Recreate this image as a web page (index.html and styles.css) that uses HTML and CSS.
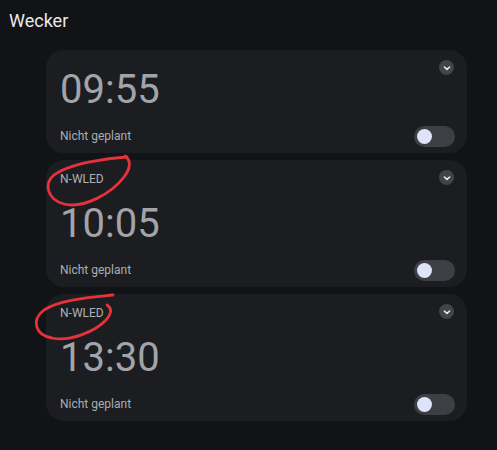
FILE: index.html
```html
<!DOCTYPE html>
<html lang="de">
<head>
<meta charset="utf-8">
<title>Wecker</title>
<link rel="stylesheet" href="styles.css">
</head>
<body>
<div class="page">
  <h1 class="title">Wecker</h1>
  <div class="list">
    <div class="card">
      <div class="main first">
        <div class="time">09:55</div>
        <div class="sched">Nicht geplant</div>
      </div>
      <div class="side">
        <span class="chev"><svg viewBox="0 0 16 16" width="16" height="16"><path d="M5 6.8 L8 9.6 L11 6.8" fill="none" stroke="#eceef2" stroke-width="1.7" stroke-linecap="round" stroke-linejoin="round"/></svg></span>
        <span class="toggle"><span class="knob"></span></span>
      </div>
    </div>
    <div class="card">
      <div class="main">
        <div class="label">N-WLED</div>
        <div class="time">10:05</div>
        <div class="sched">Nicht geplant</div>
      </div>
      <div class="side">
        <span class="chev"><svg viewBox="0 0 16 16" width="16" height="16"><path d="M5 6.8 L8 9.6 L11 6.8" fill="none" stroke="#eceef2" stroke-width="1.7" stroke-linecap="round" stroke-linejoin="round"/></svg></span>
        <span class="toggle"><span class="knob"></span></span>
      </div>
    </div>
    <div class="card">
      <div class="main">
        <div class="label">N-WLED</div>
        <div class="time">13:30</div>
        <div class="sched">Nicht geplant</div>
      </div>
      <div class="side">
        <span class="chev"><svg viewBox="0 0 16 16" width="16" height="16"><path d="M5 6.8 L8 9.6 L11 6.8" fill="none" stroke="#eceef2" stroke-width="1.7" stroke-linecap="round" stroke-linejoin="round"/></svg></span>
        <span class="toggle"><span class="knob"></span></span>
      </div>
    </div>
  </div>
  <svg class="marks" viewBox="0 0 497 450" width="497" height="450">
    <path d="M127 157 C110 158 70 163 54 175 C43 184 48 200 64 204 C84 209 112 193 124 177 C131 168 131 160 125 156" fill="none" stroke="#e8323b" stroke-width="2.8" stroke-linecap="round"/>
    <path d="M113 295 C95 297 60 299 44 310 C31 320 35 335 52 338 C70 342 96 331 106 320 C112 313 112 308 107 305" fill="none" stroke="#e8323b" stroke-width="2.8" stroke-linecap="round"/>
  </svg>
</div>
</body>
</html>
```

FILE: styles.css
```css
html, body {
  margin: 0;
  padding: 0;
  background: #121317;
}
body {
  font-family: Roboto, "Noto Sans", sans-serif;
  width: 497px;
  height: 450px;
  overflow: hidden;
}
.page {
  position: relative;
  width: 497px;
  height: 450px;
  padding: 9px 0 0 9px;
  box-sizing: border-box;
}
.title {
  margin: 0;
  font-size: 18px;
  line-height: 24px;
  font-weight: 400;
  color: #e9e9ec;
}
.list {
  margin: 17px 0 0 37px;
  width: 421px;
  display: flex;
  flex-direction: column;
  gap: 7px;
}
.card {
  display: flex;
  justify-content: space-between;
  background: #1b1d21;
  border-radius: 18px;
}
.main {
  display: flex;
  flex-direction: column;
  padding: 11px 0 9px 14px;
}
.main.first {
  padding-top: 20px;
}
.label {
  font-size: 12px;
  line-height: 16px;
  color: #aeb0b5;
  margin-bottom: 17px;
}
.time {
  font-size: 40px;
  line-height: 40px;
  color: #a2a4a9;
  margin-bottom: 18px;
}
.sched {
  font-size: 12px;
  line-height: 16px;
  color: #abadb2;
}
.side {
  display: flex;
  flex-direction: column;
  justify-content: space-between;
  align-items: flex-end;
  padding: 10px 12px 6px 0;
}
.chev {
  width: 15px;
  height: 15px;
  border-radius: 50%;
  background: #42444a;
  display: flex;
  align-items: center;
  justify-content: center;
  margin-right: 1px;
}
.chev svg {
  width: 14px;
  height: 14px;
}
.toggle {
  width: 41px;
  height: 21px;
  border-radius: 11px;
  background: #3d3f45;
  display: flex;
  align-items: center;
  padding-left: 3px;
  box-sizing: border-box;
}
.knob {
  width: 15px;
  height: 15px;
  border-radius: 50%;
  background: #dfe3f7;
}
.marks {
  position: absolute;
  left: 0;
  top: 0;
  pointer-events: none;
}
```
